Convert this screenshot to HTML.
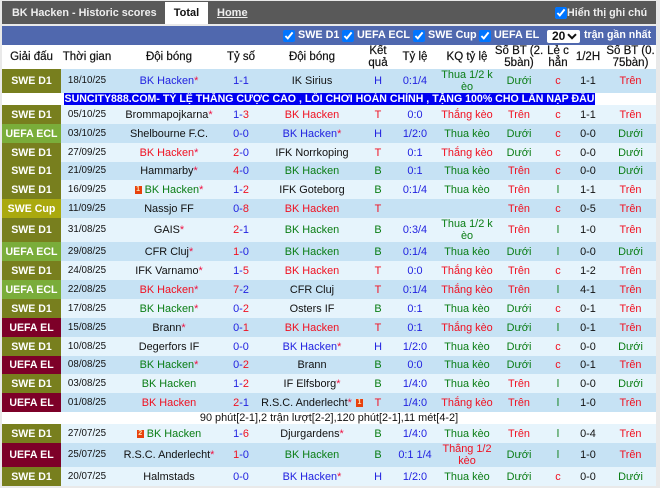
<!DOCTYPE html>
<html lang="vi"><head><meta charset="utf-8"><title>BK Hacken</title>
<style>
html,body{margin:0;padding:0}
body{width:660px;height:488px;background:#e9e9e9;overflow:hidden;position:relative;font-family:"Liberation Sans","Noto Sans CJK SC",sans-serif;font-size:11px;color:#111}
.abs{position:absolute;white-space:nowrap}
#top{position:absolute;left:2px;top:1px;width:654px;height:23px;background:#595959}
#bar{position:absolute;left:2px;top:26px;width:654px;height:19px;background:#5068ae}
.t{font-weight:bold;color:#fff;font-size:10.8px;line-height:14px}
input{margin:0;position:absolute;width:12px;height:12px}
#sel{position:absolute;left:547px;top:30px;width:33px;height:13px;background:#fff;border:0;border-radius:2px;font:bold 12px/13px "Liberation Sans",sans-serif;color:#111}
#sel span{position:absolute;left:5px;top:0}
#sel svg{position:absolute;left:20px;top:3px}
table{position:absolute;left:2px;top:45px;width:654px;border-collapse:collapse;table-layout:fixed;background:#fff}
td{padding:0;text-align:center;font-size:10.9px;line-height:12px;vertical-align:middle;overflow:hidden;word-break:break-all}
tr.h td{font-weight:normal;font-size:11.5px;line-height:12px;height:24px;color:#111;-webkit-text-stroke:.2px #111}
tr{height:19px}
tr.a td{background:#c6e2f4}
tr.b td{background:#e6f4fc}
tr.a td.l,tr.b td.l{color:#fff;font-weight:bold;font-size:10.6px}
tr td.l.d{background:#787f1e}
tr td.l.e{background:#7aad3a}
tr td.l.u{background:#7d0028}
tr td.l.c{background:#aaa90e}
td.dt{font-size:9.8px}
tr.x{height:24px}
tr.s{height:18px}
.n{color:#1f1fe0}.r{color:#f01020}.g{color:#0a7d14}.k{color:#111}
i{font-style:normal;color:#f01040}
td.ad{background:#fff;height:12px;font-size:0;line-height:0;text-align:left}
.adt{position:absolute;left:64px;top:93px;width:531px;height:12px;background:#0000f0;color:#fff;font-weight:bold;font-size:10.6px;line-height:13px;white-space:nowrap;overflow:hidden;text-align:center}
td.note{background:#fff;font-size:10.9px;height:12px;line-height:12px}
.cd{display:inline-block;width:7px;height:8px;background:#e8400c;position:relative;margin-right:3px;vertical-align:-1px;font:bold 7px/8px "Liberation Sans",sans-serif;color:#fbe3b0;text-align:center;overflow:hidden}
</style></head><body>
<div id="top"></div>
<div class="abs" style="left:12px;top:6px;font-weight:bold;font-size:10.8px;color:#eee;line-height:14px">BK Hacken - Historic scores</div>
<div class="abs" style="left:165px;top:2px;width:43px;height:22px;background:#fff;text-align:center;font-weight:bold;font-size:11px;line-height:22px;color:#111">Total</div>
<div class="abs" style="left:217px;top:6px;font-weight:bold;font-size:11px;color:#eee;text-decoration:underline;line-height:14px">Home</div>
<input type="checkbox" checked style="left:555px;top:7px">
<div class="abs" style="left:567px;top:6px;font-weight:bold;font-size:10.7px;color:#eee;line-height:14px">Hiển thị ghi chú</div>
<div id="bar"></div>
<input type="checkbox" checked style="left:283px;top:30px"><div class="abs t" style="left:298px;top:28px">SWE D1</div>
<input type="checkbox" checked style="left:342px;top:30px"><div class="abs t" style="left:357px;top:28px">UEFA ECL</div>
<input type="checkbox" checked style="left:413px;top:30px"><div class="abs t" style="left:428px;top:28px">SWE Cup</div>
<input type="checkbox" checked style="left:479px;top:30px"><div class="abs t" style="left:494px;top:28px">UEFA EL</div>
<div id="sel"><span>20</span><svg width="10" height="7" viewBox="0 0 10 7"><path d="M1 1.2L5 5.2L9 1.2" fill="none" stroke="#111" stroke-width="2"/></svg></div>
<div class="abs t" style="left:584px;top:28px;font-size:10.6px">trận gần nhất</div>
<table>
<colgroup><col style="width:59px"><col style="width:52px"><col style="width:112px"><col style="width:32px"><col style="width:110px"><col style="width:22px"><col style="width:52px"><col style="width:52px"><col style="width:52px"><col style="width:26px"><col style="width:34px"><col style="width:51px"></colgroup>
<tr class="h"><td>Giải đấu<td>Thời gian<td>Đội bóng<td>Tỷ số<td>Đội bóng<td>Kết quả<td>Tỷ lệ<td>KQ tỷ lệ<td>Số BT (2.5bàn)<td>Lẻ c hẳn<td>1/2H<td>Số BT (0.75bàn)
<tr class="a x"><td class="l d">SWE D1<td class="dt">18/10/25<td class="n">BK Hacken<i>*</i><td class="n">1-1<td class="k">IK Sirius<td class="n">H<td class="n">0:1/4<td class="g">Thua 1/2 kèo<td class="g">Dưới<td class="r">c<td class="k">1-1<td class="r">Trên
<tr style="height:12px"><td colspan="12" class="ad">&nbsp;
<tr class="b"><td class="l d">SWE D1<td class="dt">05/10/25<td class="k">Brommapojkarna<i>*</i><td class="n">1-<span class="r">3</span><td class="r">BK Hacken<td class="r">T<td class="n">0:0<td class="r">Thắng kèo<td class="r">Trên<td class="r">c<td class="k">1-1<td class="r">Trên
<tr class="a"><td class="l e">UEFA ECL<td class="dt">03/10/25<td class="k">Shelbourne F.C.<td class="n">0-0<td class="n">BK Hacken<i>*</i><td class="n">H<td class="n">1/2:0<td class="g">Thua kèo<td class="g">Dưới<td class="r">c<td class="k">0-0<td class="g">Dưới
<tr class="b"><td class="l d">SWE D1<td class="dt">27/09/25<td class="r">BK Hacken<i>*</i><td class="n"><span class="r">2</span>-0<td class="k">IFK Norrkoping<td class="r">T<td class="n">0:1<td class="r">Thắng kèo<td class="g">Dưới<td class="r">c<td class="k">0-0<td class="g">Dưới
<tr class="a s"><td class="l d">SWE D1<td class="dt">21/09/25<td class="k">Hammarby<i>*</i><td class="n"><span class="r">4</span>-0<td class="g">BK Hacken<td class="g">B<td class="n">0:1<td class="g">Thua kèo<td class="r">Trên<td class="r">c<td class="k">0-0<td class="g">Dưới
<tr class="b"><td class="l d">SWE D1<td class="dt">16/09/25<td class="g"><span class="cd">1</span>BK Hacken<i>*</i><td class="n">1-<span class="r">2</span><td class="k">IFK Goteborg<td class="g">B<td class="n">0:1/4<td class="g">Thua kèo<td class="r">Trên<td class="g">l<td class="k">1-1<td class="r">Trên
<tr class="a"><td class="l c">SWE Cup<td class="dt">11/09/25<td class="k">Nassjo FF<td class="n">0-<span class="r">8</span><td class="r">BK Hacken<td class="r">T<td class="n"><td class="g"><td class="r">Trên<td class="r">c<td class="k">0-5<td class="r">Trên
<tr class="b x"><td class="l d">SWE D1<td class="dt">31/08/25<td class="k">GAIS<i>*</i><td class="n"><span class="r">2</span>-1<td class="g">BK Hacken<td class="g">B<td class="n">0:3/4<td class="g">Thua 1/2 kèo<td class="r">Trên<td class="g">l<td class="k">1-0<td class="r">Trên
<tr class="a"><td class="l e">UEFA ECL<td class="dt">29/08/25<td class="k">CFR Cluj<i>*</i><td class="n"><span class="r">1</span>-0<td class="g">BK Hacken<td class="g">B<td class="n">0:1/4<td class="g">Thua kèo<td class="g">Dưới<td class="g">l<td class="k">0-0<td class="g">Dưới
<tr class="b"><td class="l d">SWE D1<td class="dt">24/08/25<td class="k">IFK Varnamo<i>*</i><td class="n">1-<span class="r">5</span><td class="r">BK Hacken<td class="r">T<td class="n">0:0<td class="r">Thắng kèo<td class="r">Trên<td class="r">c<td class="k">1-2<td class="r">Trên
<tr class="a"><td class="l e">UEFA ECL<td class="dt">22/08/25<td class="r">BK Hacken<i>*</i><td class="n"><span class="r">7</span>-2<td class="k">CFR Cluj<td class="r">T<td class="n">0:1/4<td class="r">Thắng kèo<td class="r">Trên<td class="g">l<td class="k">4-1<td class="r">Trên
<tr class="b"><td class="l d">SWE D1<td class="dt">17/08/25<td class="g">BK Hacken<i>*</i><td class="n">0-<span class="r">2</span><td class="k">Osters IF<td class="g">B<td class="n">0:1<td class="g">Thua kèo<td class="g">Dưới<td class="r">c<td class="k">0-1<td class="r">Trên
<tr class="a"><td class="l u">UEFA EL<td class="dt">15/08/25<td class="k">Brann<i>*</i><td class="n">0-<span class="r">1</span><td class="r">BK Hacken<td class="r">T<td class="n">0:1<td class="r">Thắng kèo<td class="g">Dưới<td class="g">l<td class="k">0-1<td class="r">Trên
<tr class="b"><td class="l d">SWE D1<td class="dt">10/08/25<td class="k">Degerfors IF<td class="n">0-0<td class="n">BK Hacken<i>*</i><td class="n">H<td class="n">1/2:0<td class="g">Thua kèo<td class="g">Dưới<td class="r">c<td class="k">0-0<td class="g">Dưới
<tr class="a s"><td class="l u">UEFA EL<td class="dt">08/08/25<td class="g">BK Hacken<i>*</i><td class="n">0-<span class="r">2</span><td class="k">Brann<td class="g">B<td class="n">0:0<td class="g">Thua kèo<td class="g">Dưới<td class="r">c<td class="k">0-1<td class="r">Trên
<tr class="b"><td class="l d">SWE D1<td class="dt">03/08/25<td class="g">BK Hacken<td class="n">1-<span class="r">2</span><td class="k">IF Elfsborg<i>*</i><td class="g">B<td class="n">1/4:0<td class="g">Thua kèo<td class="r">Trên<td class="g">l<td class="k">0-0<td class="g">Dưới
<tr class="a"><td class="l u">UEFA EL<td class="dt">01/08/25<td class="r">BK Hacken<td class="n"><span class="r">2</span>-1<td class="k">R.S.C. Anderlecht<i>*</i> <span class="cd" style="margin:0 0 0 1px">1</span><td class="r">T<td class="n">1/4:0<td class="r">Thắng kèo<td class="r">Trên<td class="g">l<td class="k">1-0<td class="r">Trên
<tr style="height:12px"><td colspan="12" class="note">90 phút[2-1],2 trận lượt[2-2],120 phút[2-1],11 mét[4-2]
<tr class="b"><td class="l d">SWE D1<td class="dt">27/07/25<td class="g"><span class="cd">2</span>BK Hacken<td class="n">1-<span class="r">6</span><td class="k">Djurgardens<i>*</i><td class="g">B<td class="n">1/4:0<td class="g">Thua kèo<td class="r">Trên<td class="g">l<td class="k">0-4<td class="r">Trên
<tr class="a x"><td class="l u">UEFA EL<td class="dt">25/07/25<td class="k">R.S.C. Anderlecht<i>*</i><td class="n"><span class="r">1</span>-0<td class="g">BK Hacken<td class="g">B<td class="n">0:1 1/4<td class="r">Thắng 1/2 kèo<td class="g">Dưới<td class="g">l<td class="k">1-0<td class="r">Trên
<tr class="b"><td class="l d">SWE D1<td class="dt">20/07/25<td class="k">Halmstads<td class="n">0-0<td class="n">BK Hacken<i>*</i><td class="n">H<td class="n">1/2:0<td class="g">Thua kèo<td class="g">Dưới<td class="r">c<td class="k">0-0<td class="g">Dưới
</table>
<div class="adt">SUNCITY888.COM- TỶ LỆ THẮNG CƯỢC CAO , LỐI CHƠI HOÀN CHỈNH , TẶNG 100% CHO LẦN NẠP ĐẦU</div>
</body></html>
